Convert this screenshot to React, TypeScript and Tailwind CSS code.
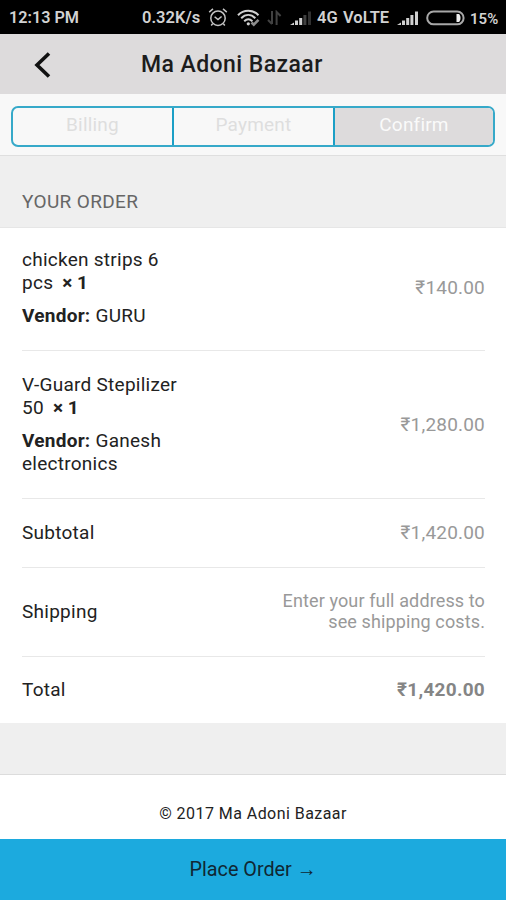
import React from 'react';

interface OrderItem {
  name: string[];
  vendor: string[];
  price: string;
  rowClass: string;
}

const items: OrderItem[] = [
  { name: ['chicken strips 6', 'pcs'], vendor: ['GURU'], price: '₹140.00', rowClass: 'h-[123px] pt-5' },
  { name: ['V-Guard Stepilizer', '50'], vendor: ['Ganesh', 'electronics'], price: '₹1,280.00', rowClass: 'h-[148px] pt-[22px]' },
];

const AlarmIcon = () => (
  <svg width="20" height="20" viewBox="0 0 20 20" fill="none" stroke="#c4c4c4" strokeWidth="1.5" className="shrink-0">
    <circle cx="10" cy="10.2" r="7.2" />
    <path d="M1.2 4.1 L5 0.9 M18.8 4.1 L15 0.9 M6.6 8.7 L10 11.6 L13.6 8.5" />
    <path d="M4.6 15.8 L3.2 17.5 M15.4 15.8 L16.8 17.5" />
  </svg>
);

const WifiIcon = () => (
  <svg width="24" height="18" viewBox="0 0 24 18" fill="none" stroke="#d0d0d0" strokeWidth="2" className="shrink-0">
    <path d="M1 6.2 C6.5 0.2 16 0.2 21.5 6.2" />
    <path d="M4.2 9.2 C8.5 5 14 5 18.3 9.2" />
    <path d="M7.2 12.2 C10 9.6 12.7 9.6 15.4 12.2" />
    <circle cx="11.3" cy="14.8" r="1.6" fill="#d0d0d0" stroke="none" />
    <path d="M14.5 13.5 L16.8 15.7 L21.5 10.8" stroke="#8d8d8d" strokeWidth="2.6" />
  </svg>
);

const DataIcon = () => (
  <svg width="15" height="16" viewBox="0 0 15 16" fill="none" stroke="#424242" strokeWidth="2" className="shrink-0">
    <path d="M5 1 V14 M1 10 L5 14" />
    <path d="M9.6 15 V2 L13.6 6" />
  </svg>
);

const SignalIcon = ({ weak = false }: { weak?: boolean }) => (
  <svg width="22" height="15" viewBox="0 0 22 15" fill="#d0d0d0" className="shrink-0">
    <path d="M0 14 L4 11.5 V14 Z" />
    <rect x="5" y="9.5" width="3" height="4.5" />
    <rect x="9.2" y="7" width="3" height="7" />
    <rect x="13.4" y="4" width="3" height="10" fill={weak ? '#404040' : '#d0d0d0'} />
    <rect x="18" y="0.5" width="3" height="13.5" fill={weak ? '#303030' : '#d0d0d0'} />
  </svg>
);

const BatteryIcon = () => (
  <svg width="40" height="16" viewBox="0 0 40 16" fill="none" className="shrink-0">
    <rect x="1.2" y="1.5" width="36.4" height="12.8" rx="6.4" stroke="#a8a8a8" strokeWidth="2" />
    <path d="M30.5 4 H33 C35 5.5 35 10.5 33 12 H30.5 Z" fill="#eeeeee" />
  </svg>
);

const StatusBar = () => (
  <div className="flex h-[34px] items-center bg-black pt-[2px] text-[16.5px] font-semibold leading-none text-[#d2d2d2]">
    <span className="ml-[9px] w-[133px] whitespace-nowrap text-[16.2px]">12:13 PM</span>
    <span className="w-[66px] whitespace-nowrap">0.32K/s</span>
    <span className="w-[29px]"><AlarmIcon /></span>
    <span className="w-[30px]"><WifiIcon /></span>
    <span className="w-[23px]"><DataIcon /></span>
    <span className="w-[27px]"><SignalIcon weak /></span>
    <span className="w-[26px] whitespace-nowrap">4G</span>
    <span className="w-[54px] whitespace-nowrap">VoLTE</span>
    <span className="w-[29px]"><SignalIcon /></span>
    <span className="w-[44px]"><BatteryIcon /></span>
    <span className="whitespace-nowrap pt-[2px] text-[15px]">15%</span>
  </div>
);

const App: React.FC = () => {
  return (
    <div className="flex h-[900px] w-[506px] flex-col overflow-hidden bg-white font-['Roboto',sans-serif] text-[19px] leading-[23px] text-[#222]">
      <StatusBar />

      {/* Header */}
      <header className="flex h-[60px] items-center bg-[#dddbdc]">
        <button className="ml-[33px] w-[108px] pt-px" aria-label="Back">
          <svg width="18" height="28" viewBox="0 0 18 28" fill="none" stroke="#111" strokeWidth="3.6">
            <path d="M16 2.5 L4 14 L16 25.5" />
          </svg>
        </button>
        <h1 className="whitespace-nowrap text-[23px] font-medium tracking-[0.43px] text-[#1c1c1c]">Ma Adoni Bazaar</h1>
      </header>

      {/* Checkout steps */}
      <div className="h-[62px] border-b border-[#dfdfdf] bg-[#f8f8f8] px-[11px] pt-3">
        <div className="flex h-[41px] overflow-hidden rounded-[7px] border-2 border-[#36a9c9] text-center leading-[33px] tracking-[0.2px]">
          <div className="w-[159px] text-[#dedede]">Billing</div>
          <div className="w-[163px] border-x-2 border-[#1b9fc6] text-[#dedede]">Payment</div>
          <div className="flex-1 bg-[#dddbdc] text-[#fafafa]">Confirm</div>
        </div>
      </div>

      <div className="h-[72px] border-b border-[#e6e6e6] bg-[#efefef] pl-[22px] pt-[34px] tracking-[0.35px] text-[#666]">YOUR ORDER</div>

      {/* Order lines */}
      <div className="h-[495px] px-[21px] pl-[22px] tracking-[0.26px]">
        {items.map((item) => (
          <div key={item.price} className={`${item.rowClass} flex justify-between border-b border-[#e8e8e8]`}>
            <div>
              <p>{item.name[0]}</p>
              <p>{item.name[1]}<b className="ml-[9px] font-bold tracking-normal">× 1</b></p>
              <p className="mt-[10px]"><b className="font-bold">Vendor:</b> {item.vendor[0]}</p>
              {item.vendor[1] && <p>{item.vendor[1]}</p>}
            </div>
            <span className="mb-[23px] self-center tracking-[0.2px] text-[#999]">{item.price}</span>
          </div>
        ))}
        <div className="flex h-[69px] items-center justify-between border-b border-[#e8e8e8] pb-[2px]">
          <span>Subtotal</span>
          <span className="tracking-[0.2px] text-[#999]">₹1,420.00</span>
        </div>
        <div className="flex h-[89px] items-center justify-between border-b border-[#e8e8e8] pb-[2px]">
          <span>Shipping</span>
          <span className="text-right text-[18px] leading-[21px] tracking-[0.12px] text-[#999]">Enter your full address to<br />see shipping costs.</span>
        </div>
        <div className="flex h-[66px] items-center justify-between pb-[2px]">
          <span>Total</span>
          <span className="font-bold text-[#858585]">₹1,420.00</span>
        </div>
      </div>

      <div className="h-[52px] border-b border-[#dcdcdc] bg-[#efefef]" />
      <footer className="h-[64px] pt-[27px] text-center text-[16px] tracking-[0.45px]">© 2017 Ma Adoni Bazaar</footer>
      <button className="h-[61px] bg-[#1caade] text-[19.8px] text-[#102733]">Place Order →</button>
    </div>
  );
};

export default App;
